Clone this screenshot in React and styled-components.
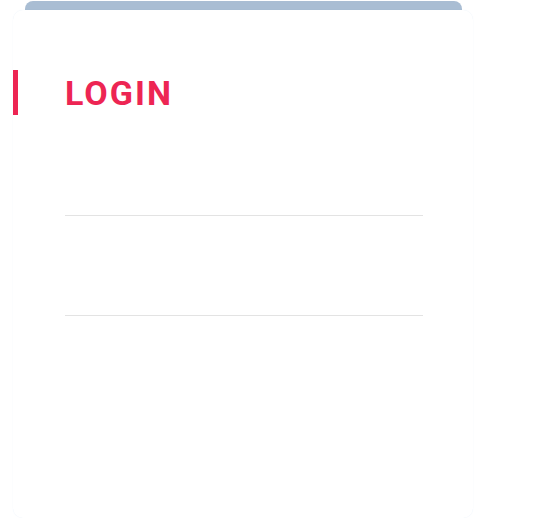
import styled, { createGlobalStyle } from "styled-components";

const Global = createGlobalStyle`
  html, body {
    margin: 0;
    padding: 0;
    background: #ffffff;
    font-family: Roboto, "Noto Sans", sans-serif;
  }
`;

const Page = styled.div`
  width: 545px;
  height: 518px;
  overflow: hidden;
  padding: 1px 0 0 13px;
  box-sizing: border-box;
`;

const Stack = styled.div`
  width: 460px;
`;

const BackCard = styled.div`
  height: 9px;
  margin: 0 11px 0 12px;
  background: #a9bdd3;
  border-radius: 8px 8px 0 0;
`;

const Card = styled.div`
  background: #ffffff;
  border-radius: 10px;
  height: 508px;
  padding: 60px 0 0;
  box-sizing: border-box;
  box-shadow: 0 0 1px rgba(120, 170, 220, 0.2);
`;

const Title = styled.h1`
  margin: 0 0 36px;
  border-left: 5px solid #ed2553;
  padding: 0 0 0 47px;
  height: 45px;
  display: flex;
  align-items: center;
  color: #ed2553;
  font-size: 34px;
  font-weight: 700;
  letter-spacing: 2px;
  text-transform: uppercase;
`;

const Field = styled.div`
  margin: 0 50px 35px 52px;
`;

const Input = styled.input`
  display: block;
  width: 100%;
  height: 64px;
  box-sizing: content-box;
  padding: 0;
  border: none;
  border-bottom: 1px solid #e3e3e3;
  background: transparent;
  outline: none;
  font-family: Roboto, sans-serif;
  font-size: 24px;
  color: #212121;
`;

export default function App() {
  return (
    <Page>
      <Global />
      <Stack>
        <BackCard />
        <Card>
          <Title>Login</Title>
          <Field>
            <Input type="text" aria-label="Username" />
          </Field>
          <Field>
            <Input type="password" aria-label="Password" />
          </Field>
        </Card>
      </Stack>
    </Page>
  );
}
